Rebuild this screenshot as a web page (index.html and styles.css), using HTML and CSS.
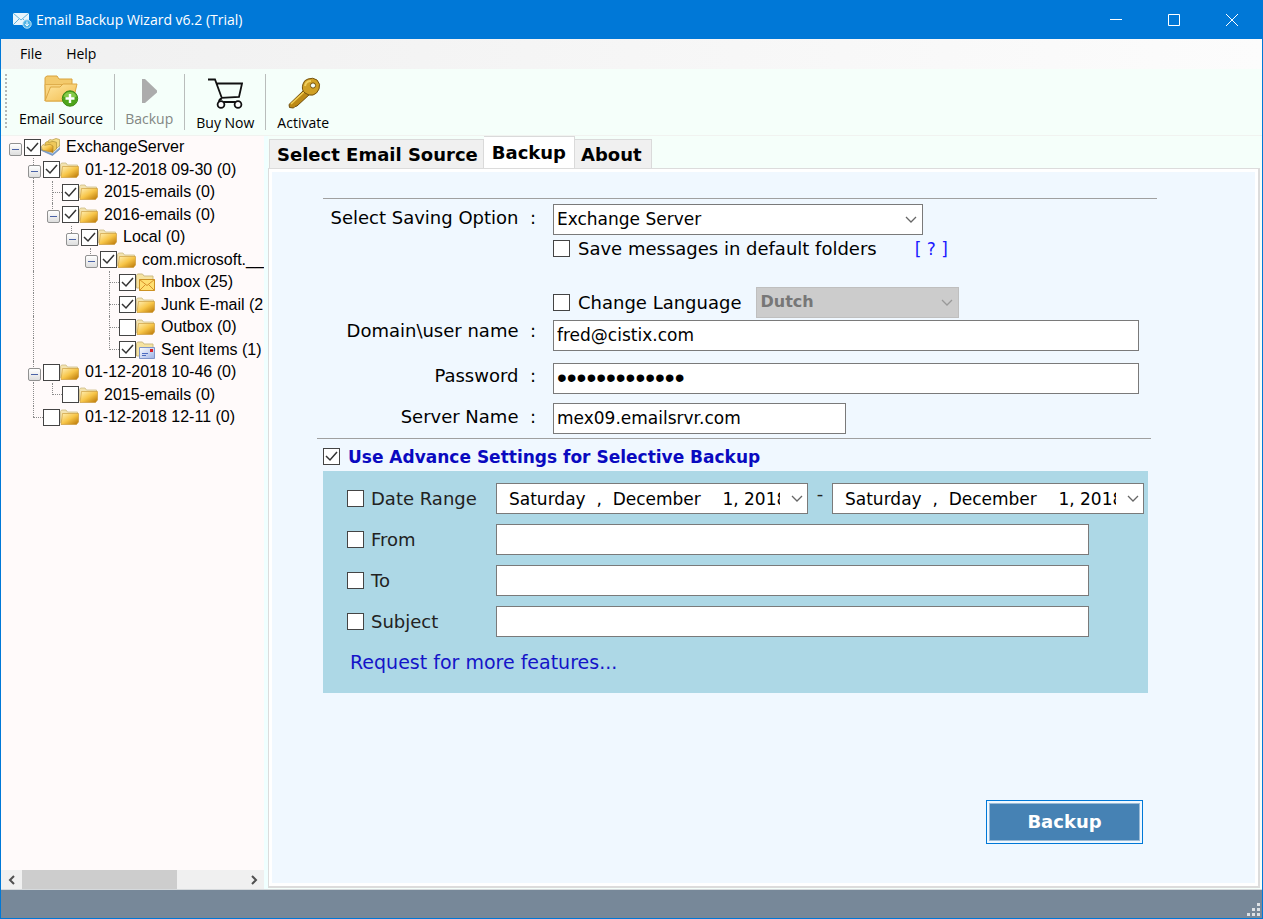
FILE: index.html
```html
<!DOCTYPE html>
<html lang="en">
<head>
<meta charset="utf-8">
<title>Email Backup Wizard v6.2 (Trial)</title>
<link rel="stylesheet" href="styles.css">
</head>
<body>
<svg class="sprite" aria-hidden="true">
  <defs>
    <linearGradient id="gold" x1="0" y1="0" x2="1" y2="1"><stop offset="0" stop-color="#fff0b8"/><stop offset=".5" stop-color="#f7c548"/><stop offset="1" stop-color="#b87404"/></linearGradient>
    <linearGradient id="sand" x1="0" y1="0" x2="1" y2="1"><stop offset="0" stop-color="#ffe6a0"/><stop offset="1" stop-color="#f2bd4e"/></linearGradient>
    <linearGradient id="paper" x1="0" y1="0" x2="1" y2="1"><stop offset="0" stop-color="#ffffff"/><stop offset="1" stop-color="#9db2e6"/></linearGradient>
  </defs>
  <symbol id="folder" viewBox="0 0 20 18">
    <path d="M.5 15V3.500l1-1.500h4.500l1.500 2h10v3" fill="#f3e3b0" stroke="#cdbb84" stroke-width=".8"/>
    <path d="M1 16.500 2.500 5.500H18.500V14l-2 2.500z" fill="url(#gold)" stroke="#c8942f" stroke-width=".6"/>
  </symbol>
  <symbol id="inbox" viewBox="0 0 20 18">
    <path d="M.5 15V2.500L1.500 1h5l1.500 2h9v12z" fill="#f6e3a0" stroke="#cdbb84"/>
    <path d="M3.500 6.500h15v11h-15z" fill="#ffdf70" stroke="#cc9123"/>
    <path d="m3.500 6.500 7.500 6 7.500-6M3.500 17.500l6-6M18.500 17.500l-6-6" fill="none" stroke="#d8912a"/>
  </symbol>
  <symbol id="sent" viewBox="0 0 20 18">
    <path d="M.5 15V2.500L1.500 1h5l1.500 2h9v12z" fill="#f6e3a0" stroke="#cdbb84"/>
    <path d="M3.500 6.500h15v11h-15z" fill="url(#paper)" stroke="#7f95c9"/>
    <path d="M14 8h3v3h-3z" fill="#d8232b"/>
    <path d="M6 12.500h6M6 14.500h4" stroke="#4d6bc0"/>
  </symbol>
  <symbol id="stack" viewBox="0 0 20 18">
    <path d="m.5 12.500 11 5 7-6V8L.5 10z" fill="#7ba2d6" stroke="#5d7ea9" stroke-width=".6"/>
    <path d="m.5 11 11 4.500 7-6V7L.5 9z" fill="#fff" stroke="#b4c2d0" stroke-width=".5"/>
    <path d="M7 5.500V3L9 1.500l2 .5 4-1.500 3.500 1V8L12 13z" fill="#f6dd83" stroke="#a58932" stroke-width=".6"/>
    <path d="M4 7.500V5l2-1.500 2 .8 4-1 3.500 1V11l-4 3z" fill="#eec85a" stroke="#a58932" stroke-width=".6"/>
    <path d="m.5 8.500 1.500-2 2 .8 5-1L12 8v6.500L1 12z" fill="url(#gold)" stroke="#a78326" stroke-width=".6"/>
  </symbol>
</svg>

<div class="window">
  <header class="titlebar">
    <svg class="app-icon" viewBox="0 0 20 18" aria-hidden="true">
      <path d="M1 2h16v12H1z" fill="#e9f5fc"/>
      <path d="m1 2 8 7 8-7M1 14l6-6M17 14l-6-6" fill="none" stroke="#62b3dc"/>
      <circle cx="15" cy="13" r="4.200" fill="#4db2e6" stroke="#c2e7f8"/>
      <path d="M15 10.500v4m-1.800-1.600L15 15l1.800-2.100" fill="none" stroke="#fff"/>
    </svg>
    <h1 class="title">Email Backup Wizard v6.2 (Trial)</h1>
    <div class="window-buttons">
      <button class="window-button" type="button" aria-label="Minimize"><svg viewBox="0 0 14 14"><path d="M1 6.500h12"/></svg></button>
      <button class="window-button" type="button" aria-label="Maximize"><svg viewBox="0 0 14 14"><path d="M1.500 1.500h11v11h-11z"/></svg></button>
      <button class="window-button" type="button" aria-label="Close"><svg viewBox="0 0 14 14"><path d="m1 1 12 12M13 1 1 13"/></svg></button>
    </div>
  </header>

  <nav class="menubar">
    <button class="menu" type="button">File</button>
    <button class="menu" type="button">Help</button>
  </nav>

  <div class="toolbar">
    <span class="grip"></span>
    <button class="tool tool-first" type="button">
      <svg class="tool-icon" viewBox="0 0 36 32" aria-hidden="true">
        <path d="M2 26V2.500L4 1h10l2 3h13v6" fill="#f3ca6c" stroke="#d9a23d"/>
        <path d="M2 9.500h28V26H3z" fill="#f9d57f" stroke="#dfae4c"/>
        <path d="M2 26 7.500 12H17l3-3h14l-4 17z" fill="url(#sand)" stroke="#dca742"/>
        <circle cx="27" cy="23.500" r="7.700" fill="#4ea51b" stroke="#3f8a16"/>
        <path d="M20.500 21.500a7 7 0 0 1 13 0q-6 3-13 0z" fill="#86cb4a"/>
        <path d="M27 19v9M22.500 23.500h9" stroke="#fff" stroke-width="2.400"/>
      </svg>
      <span>Email Source</span>
    </button>
    <button class="tool" type="button" disabled>
      <svg class="tool-icon" viewBox="0 0 36 32" aria-hidden="true"><path d="M11 4v24h3L26 17.500v-2L14 4z" fill="#acacac"/></svg>
      <span>Backup</span>
    </button>
    <button class="tool tool-low" type="button">
      <svg class="tool-icon" viewBox="0 0 36 32" aria-hidden="true">
        <g fill="none" stroke="#111" stroke-width="1.800"><path d="M1 2.500h7l7 19M9.500 6.500H35L32 20l-18 .8M15 21.500q-3 .5-3 3.500h20"/><circle cx="14" cy="27.500" r="3.400" fill="#fff"/><circle cx="31" cy="27.500" r="3.400" fill="#fff"/></g>
      </svg>
      <span>Buy Now</span>
    </button>
    <button class="tool tool-low tool-last" type="button">
      <svg class="tool-icon" viewBox="0 0 36 32" aria-hidden="true">
        <path d="m20 12 5 5-13 12-2 .5-1.500 1.500-4-.5-.5-3z" fill="#bd8a16" stroke="#6f4d0c"/>
        <path d="m6 27 14-13" stroke="#f3cf55" stroke-width="1.500"/>
        <path d="M18 7q1-4 5-5 5-2 9 1 4 4 2 9-2 5-6 6-4 1-8-2-4-3-2-9z" fill="#d0a024" stroke="#75530e"/>
        <path d="M20 9q1-5 6-5" fill="none" stroke="#f0cf5c" stroke-width="2"/>
        <circle cx="28" cy="8.500" r="2.600" fill="#f5fffa" stroke="#75530e"/>
      </svg>
      <span>Activate</span>
    </button>
  </div>

  <div class="body">
    <aside class="sidebar">
      <ul class="tree">
        <li class="row"><button class="toggle root" type="button" aria-label="Collapse"></button><input class="check" type="checkbox" id="n0" checked><svg class="node-icon"><use href="#stack"/></svg><label for="n0">ExchangeServer</label></li>
        <li class="row"><i></i><button class="toggle up down" type="button" aria-label="Collapse"></button><input class="check" type="checkbox" id="n1" checked><svg class="node-icon"><use href="#folder"/></svg><label for="n1">01-12-2018 09-30 (0)</label></li>
        <li class="row"><i></i><i class="up down"></i><i class="up down across"></i><input class="check" type="checkbox" id="n2" checked><svg class="node-icon"><use href="#folder"/></svg><label for="n2">2015-emails (0)</label></li>
        <li class="row"><i></i><i class="up down"></i><button class="toggle up" type="button" aria-label="Collapse"></button><input class="check" type="checkbox" id="n3" checked><svg class="node-icon"><use href="#folder"/></svg><label for="n3">2016-emails (0)</label></li>
        <li class="row"><i></i><i class="up down"></i><i></i><button class="toggle up" type="button" aria-label="Collapse"></button><input class="check" type="checkbox" id="n4" checked><svg class="node-icon"><use href="#folder"/></svg><label for="n4">Local (0)</label></li>
        <li class="row"><i></i><i class="up down"></i><i></i><i></i><button class="toggle up" type="button" aria-label="Collapse"></button><input class="check" type="checkbox" id="n5" checked><svg class="node-icon"><use href="#folder"/></svg><label for="n5">com.microsoft.__</label></li>
        <li class="row"><i></i><i class="up down"></i><i></i><i></i><i></i><i class="up down across"></i><input class="check" type="checkbox" id="n6" checked><svg class="node-icon"><use href="#inbox"/></svg><label for="n6">Inbox (25)</label></li>
        <li class="row"><i></i><i class="up down"></i><i></i><i></i><i></i><i class="up down across"></i><input class="check" type="checkbox" id="n7" checked><svg class="node-icon"><use href="#folder"/></svg><label for="n7">Junk E-mail (2</label></li>
        <li class="row"><i></i><i class="up down"></i><i></i><i></i><i></i><i class="up down across"></i><input class="check" type="checkbox" id="n8"><svg class="node-icon"><use href="#folder"/></svg><label for="n8">Outbox (0)</label></li>
        <li class="row"><i></i><i class="up down"></i><i></i><i></i><i></i><i class="up across"></i><input class="check" type="checkbox" id="n9" checked><svg class="node-icon"><use href="#sent"/></svg><label for="n9">Sent Items (1)</label></li>
        <li class="row"><i></i><button class="toggle up down" type="button" aria-label="Collapse"></button><input class="check" type="checkbox" id="n10"><svg class="node-icon"><use href="#folder"/></svg><label for="n10">01-12-2018 10-46 (0)</label></li>
        <li class="row"><i></i><i class="up down"></i><i class="up across"></i><input class="check" type="checkbox" id="n11"><svg class="node-icon"><use href="#folder"/></svg><label for="n11">2015-emails (0)</label></li>
        <li class="row"><i></i><i class="up across"></i><input class="check" type="checkbox" id="n12"><svg class="node-icon"><use href="#folder"/></svg><label for="n12">01-12-2018 12-11 (0)</label></li>
      </ul>
      <div class="scrollbar">
        <button class="scroll-arrow" type="button" aria-label="Scroll left"><svg viewBox="0 0 10 10"><path d="M7 1 3 5l4 4"/></svg></button>
        <div class="scroll-track"><div class="scroll-thumb"></div></div>
        <button class="scroll-arrow" type="button" aria-label="Scroll right"><svg viewBox="0 0 10 10"><path d="m3 1 4 4-4 4"/></svg></button>
      </div>
    </aside>

    <main class="main">
      <div class="tabs" role="tablist">
        <button class="tab" type="button" role="tab">Select Email Source</button>
        <button class="tab tab-active" type="button" role="tab" aria-selected="true">Backup</button>
        <button class="tab" type="button" role="tab">About</button>
      </div>
      <form class="panel">
        <hr class="rule">
        <div class="fields">
          <label class="name" for="saving">Select Saving Option  :</label>
          <select class="box saving" id="saving"><option>Exchange Server</option></select>
          <div class="option option-save">
            <input class="check" type="checkbox" id="defaults"><label for="defaults">Save messages in default folders</label>
            <a class="help" href="#help">[ ? ]</a>
          </div>
          <div class="option option-language">
            <input class="check" type="checkbox" id="change"><label for="change">Change Language</label>
            <select class="box language" aria-label="Language" disabled><option>Dutch</option></select>
          </div>
          <label class="name" for="user">Domain\user name  :</label>
          <input class="box user" id="user" type="text" value="fred@cistix.com">
          <label class="name" for="pass">Password  :</label>
          <input class="box pass" id="pass" type="password" value="abcdefghijklm">
          <label class="name" for="server">Server Name  :</label>
          <input class="box server" id="server" type="text" value="mex09.emailsrvr.com">
        </div>
        <hr class="rule rule-second">
        <div class="advanced-head">
          <input class="check" type="checkbox" id="advanced" checked><label for="advanced">Use Advance Settings for Selective Backup</label>
        </div>
        <section class="advanced">
          <div class="filter">
            <input class="check" type="checkbox" id="range"><label for="range">Date Range</label>
            <div class="dates">
              <input class="box date" type="text" aria-label="Start date" value="Saturday  ,  December    1, 2018">
              <span>-</span>
              <input class="box date" type="text" aria-label="End date" value="Saturday  ,  December    1, 2018">
            </div>
          </div>
          <div class="filter"><input class="check" type="checkbox" id="from"><label for="from">From</label><input class="box text" type="text" aria-label="From address"></div>
          <div class="filter"><input class="check" type="checkbox" id="to"><label for="to">To</label><input class="box text" type="text" aria-label="To address"></div>
          <div class="filter"><input class="check" type="checkbox" id="subject"><label for="subject">Subject</label><input class="box text" type="text" aria-label="Subject text"></div>
          <a class="request" href="#features">Request for more features...</a>
        </section>
        <button class="backup" type="button">Backup</button>
      </form>
    </main>
  </div>

  <footer class="statusbar">
    <svg class="resize" viewBox="0 0 14 14" aria-hidden="true"><g fill="#dde2e6"><path d="M11 1h3v3h-3zM11 6h3v3h-3zM6 6h3v3H6zM11 11h3v3h-3zM6 11h3v3H6zM1 11h3v3H1z"/></g></svg>
  </footer>
</div>
</body>
</html>
```

FILE: styles.css
```css
* { box-sizing: border-box; }
body { margin: 0; }
button, input, select { font: inherit; color: inherit; margin: 0; }
button { background: none; border: 0; padding: 0; }
.sprite { position: absolute; width: 0; height: 0; }

.window {
  display: flex;
  flex-direction: column;
  min-height: 100vh;
  border: 1px solid #0078d7;
  background: #f5fffa;
  color: #000;
  font-family: "Open Sans", "Noto Sans", sans-serif;
  font-size: 14px;
}

/* Title bar */
.titlebar { display: flex; align-items: center; height: 38px; padding: 0 1px 0 11px; background: #0078d7; color: #fff; }
.app-icon { width: 20px; height: 18px; margin-right: 4px; }
.title { margin: 0; padding-bottom: 2px; flex: 1; font-size: 14px; font-weight: 400; }
.window-buttons { display: flex; }
.window-button { width: 58px; height: 38px; display: grid; place-items: center; }
.window-button svg { width: 14px; height: 14px; fill: none; stroke: #fff; }

/* Menu bar */
.menubar { display: flex; gap: 24px; height: 30px; padding: 0 0 2px 19px; background: linear-gradient(90deg, #f0f0f0, #fcfcfc); }

/* Toolbar */
.toolbar { display: flex; height: 67px; padding: 5px 4px; border-bottom: 1px solid #f1f3f0; line-height: 20px; }
.grip { width: 2px; margin-right: 10px; background: repeating-linear-gradient(#b4b8b6 0 2px, transparent 2px 4px); }
.tool { display: flex; flex-direction: column; align-items: center; justify-content: flex-start; padding: 1px 11px 0; border-right: 1px solid #b9bdbb; }
.tool-first { padding-left: 2px; }
.tool-icon { flex: none; width: 36px; height: 32px; margin-bottom: 2px; }
.tool:disabled { padding-left: 10px; color: #838784; }
.tool-low { padding-top: 3px; }
.tool-low .tool-icon { margin-bottom: 4px; }
.tool-low span { line-height: 18px; padding-top: 1px; }
.tool-last { border-right: 0; }

/* Body */
.body { flex: 1; display: flex; align-items: stretch; border-bottom: 1px solid #d5d9dc; }
.sidebar { width: 263px; display: flex; flex-direction: column; background: #fffafa; overflow: hidden; flex: none; font: 16px/22px "Liberation Sans", sans-serif; }
.tree { list-style: none; margin: 0; padding: 0 0 0 4px; flex: 1; display: grid; grid-auto-rows: 22px 23px; align-content: start; white-space: nowrap; }
.row { display: flex; align-items: center; }
.row label { margin-left: 5px; }
.row i, .toggle { flex: none; align-self: stretch; width: 19px; position: relative; }
.row i::before, .toggle::before { content: ""; position: absolute; left: 9px; top: 0; bottom: 0; }
.row .up::before, .row .down::before { border-left: 1px dotted #8a8a8a; }
.row .up:not(.down)::before { bottom: 50%; }
.row .across::after { content: ""; position: absolute; left: 9px; right: 0; top: 11px; border-top: 1px dotted #8a8a8a; }
.toggle::after {
  content: ""; position: absolute; left: 4px; top: 7px; width: 11px; height: 11px;
  border: 1px solid #919191; border-radius: 2px;
  background: linear-gradient(#4b63a7, #4b63a7) center / 7px 1px no-repeat, linear-gradient(#fff, #dedede);
}
.node-icon { width: 20px; height: 18px; flex: none; }

.check {
  appearance: none; flex: none; width: 17px; height: 17px;
  border: 1px solid #444; background: #fff;
}
.check:checked { background: #fff url("data:image/svg+xml,%3Csvg xmlns='http://www.w3.org/2000/svg' viewBox='0 0 15 15'%3E%3Cpath d='m2 7 4 4 7-8' fill='none' stroke='%23333' stroke-width='1.500'/%3E%3C/svg%3E") center / 15px no-repeat; }

.scrollbar { display: flex; height: 19px; background: #f0f0f0; }
.scroll-arrow { width: 21px; display: grid; place-items: center; }
.scroll-arrow svg { width: 10px; height: 10px; fill: none; stroke: #505050; stroke-width: 2; }
.scroll-track { flex: 1; }
.scroll-thumb { width: 70%; height: 100%; background: #cdcdcd; }

/* Tabs */
.main { flex: 1; min-width: 0; display: flex; flex-direction: column; padding: 0 2px 1px 4px; font: 18px/22px "DejaVu Sans", sans-serif; background: linear-gradient(90deg, #f0ffff 4px, #f5fffa 4px); }
.tabs { display: flex; align-items: flex-end; height: 32px; padding-left: 1px; font-weight: 700; }
.tab { height: 29px; padding: 2px 9px 0 7px; border: 1px solid #dadada; border-bottom: 0; border-left-width: 0; background: #f0f0f0; }
.tab:first-child { border-left-width: 1px; padding-right: 5px; }
.tab-active { height: 32px; padding: 0 8px; background: #fff; }
.tab:last-child { padding-left: 6px; }

/* Form */
.panel {
  flex: 1; display: flex; flex-direction: column;
  padding: 26px 101px 42px 54px;
  border: solid #dcdcdc; border-width: 1px 2px 2px 1px;
  background: #f0f8ff; box-shadow: inset 0 0 0 3px #fff;
}
.rule { width: 100%; margin: 3px 0 5px; border: 0; border-top: 1px solid #a0a0a0; }
.fields { display: grid; grid-template-columns: 213px 1fr; column-gap: 17px; padding-right: 18px; }
.name { text-align: right; padding-top: 3px; white-space: pre; }
.box {
  appearance: none; width: 100%; height: 31px; padding: 0 3px 2px;
  border: 1px solid #7a7a7a; border-radius: 0; background: #fff; font-size: 17px;
}
select.box, .date {
  background: #fff url("data:image/svg+xml,%3Csvg xmlns='http://www.w3.org/2000/svg' viewBox='0 0 12 8'%3E%3Cpath d='m1 1 5 5 5-5' fill='none' stroke='%23666' stroke-width='1.300'/%3E%3C/svg%3E") right 5px center / 12px 8px no-repeat;
}
.saving { width: 370px; }
.option { grid-column: 2; display: flex; align-items: center; gap: 8px; }
.option-save { height: 27px; }
.option-language { height: 31px; margin: 25px 0 2px; }
.help { margin-left: 30px; font-size: 17px; color: #1a1aff; text-decoration: none; white-space: pre; }
select.language { width: 203px; height: 31px; margin-left: 7px; font-weight: 700; font-size: 16px; }
select.language:disabled {
  background: #ccc url("data:image/svg+xml,%3Csvg xmlns='http://www.w3.org/2000/svg' viewBox='0 0 12 8'%3E%3Cpath d='m1 1 5 5 5-5' fill='none' stroke='%23999' stroke-width='1.300'/%3E%3C/svg%3E") right 5px center / 12px 8px no-repeat;
  border-color: #bfbfbf; color: #777; opacity: 1;
}
.pass { margin-top: 12px; font-family: "Liberation Sans", sans-serif; font-size: 28px; }
.server { margin-top: 9px; width: 293px; }
.name[for="pass"] { padding-top: 14px; }
.name[for="server"] { padding-top: 12px; }
.name[for="user"] { padding-top: 0; }
.rule-second { margin: 4px 0 7px -6px; }
.advanced-head { display: flex; align-items: center; gap: 8px; height: 22px; margin-bottom: 3px; color: #0a0ac0; font-size: 17px; font-weight: 700; }
.advanced-head .check { margin-bottom: 2px; }
.advanced { margin-right: 9px; padding: 12px 4px 20px 24px; display: flex; flex-direction: column; gap: 10px; background: #add8e6; }
.filter { display: grid; grid-template-columns: 17px 118px 1fr; column-gap: 7px; align-items: center; color: #222; }
.filter label { white-space: nowrap; }
.filter .check { margin-bottom: 1px; }
.filter .box { color: #000; padding-bottom: 0; }
.filter .text { width: calc(100% - 55px); }
.dates { display: grid; grid-template-columns: 1fr 24px 1fr; text-align: center; }
.filter .date { padding: 0 27px 0 12px; background-position: right 4px center; }
.request { margin: 4px 0 0 3px; align-self: flex-start; color: #1414c8; font-size: 19px; text-decoration: none; }
.backup {
  align-self: flex-end; width: 157px; height: 44px; margin: auto 14px 0 0;
  border: 1px solid #0078d7; background: #4682b4; color: #fff; font-weight: 700;
  box-shadow: inset 0 0 0 2px #f0f8ff, inset 0 0 0 3px #9bbbd6;
}

/* Status bar */
.statusbar { height: 28px; display: flex; justify-content: flex-end; align-items: flex-end; padding: 2px; background: #778899; }
.resize { width: 14px; height: 14px; }
```
